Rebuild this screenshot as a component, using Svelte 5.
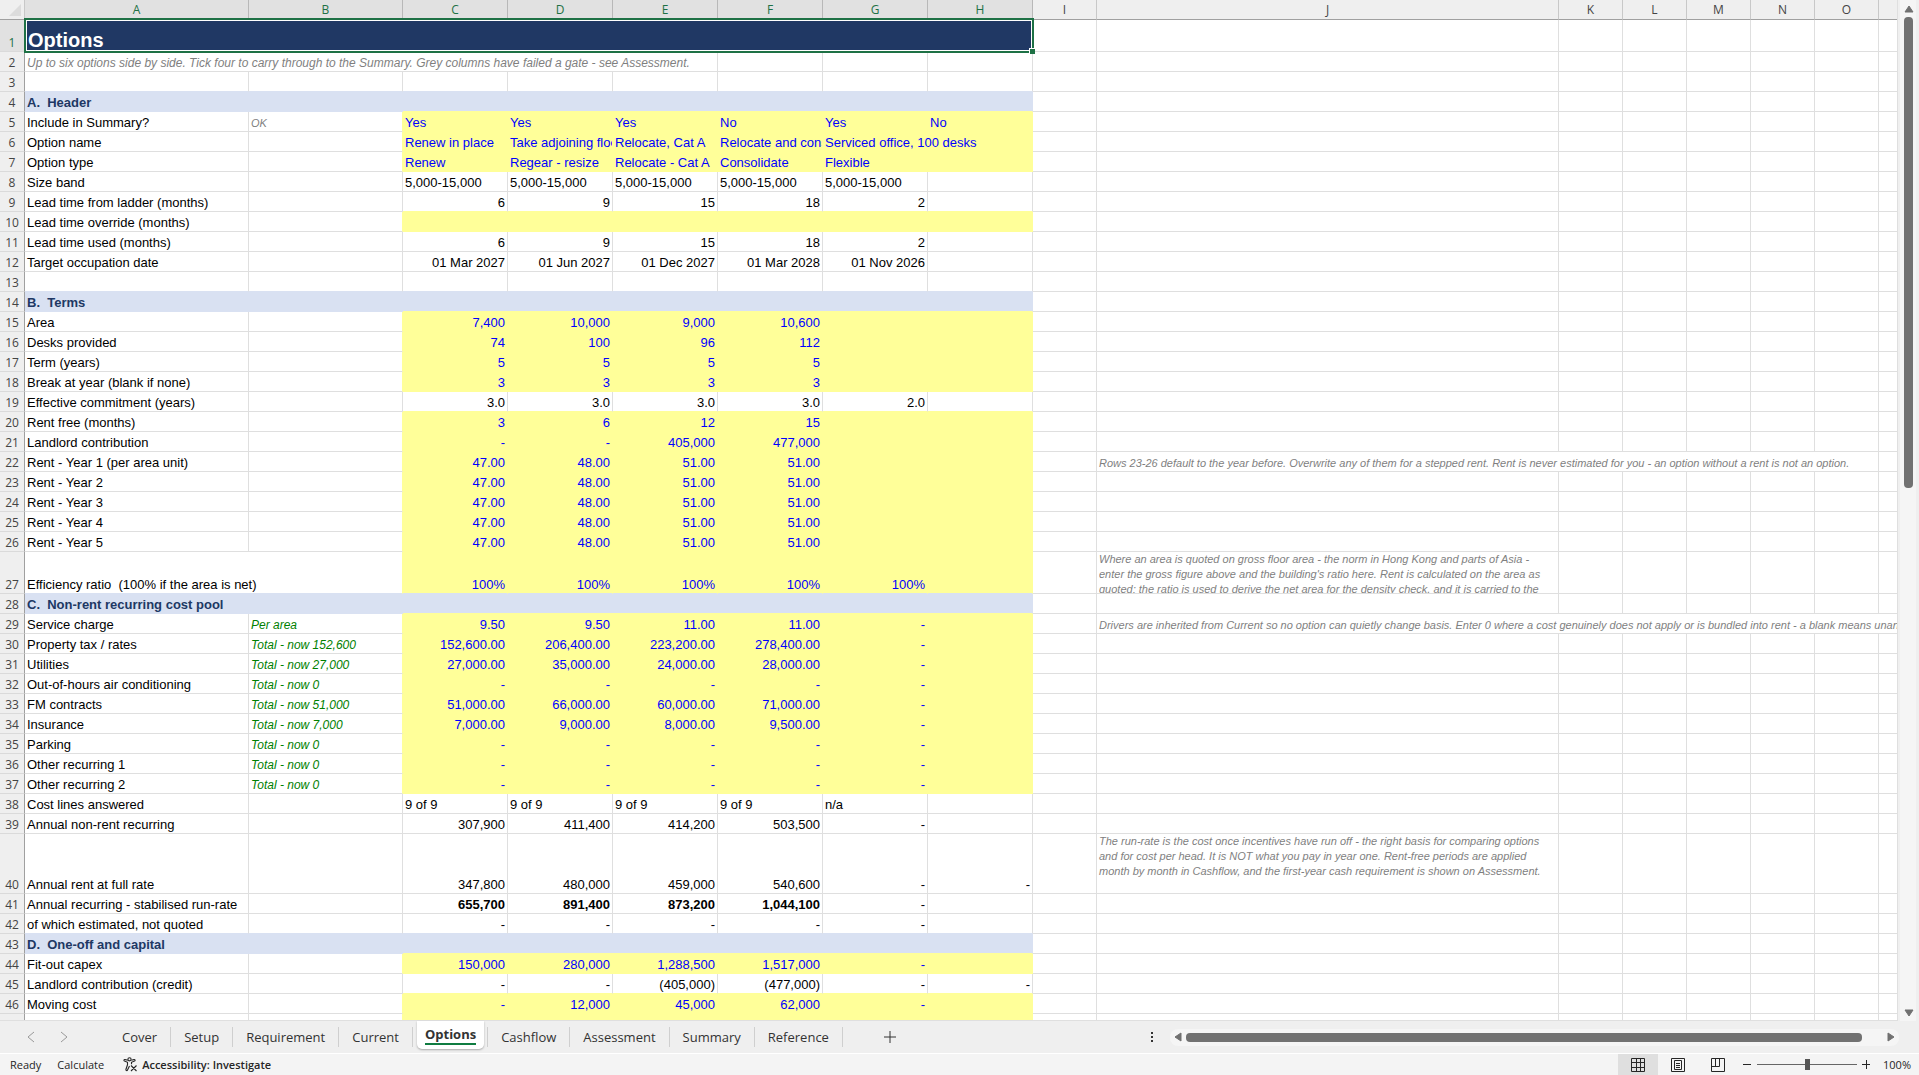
<script>
  const DASH = '-';
  const row = (n, label, values = [], o = {}) => ({ n, label, values, ...o });
  const band = (n, label) => ({ n, label, values: [], band: true });
  const rows = [
    row(3, ''),
    band(4, 'A.  Header'),
    row(5, 'Include in Summary?', ['Yes', 'Yes', 'Yes', 'No', 'Yes', 'No'], { input: true, left: true, b: 'OK', bKind: 'note' }),
    row(6, 'Option name', ['Renew in place', 'Take adjoining floor', 'Relocate, Cat A', 'Relocate and cons', 'Serviced office, 100 desks'], { input: true, left: true, spillG: true }),
    row(7, 'Option type', ['Renew', 'Regear - resize', 'Relocate - Cat A', 'Consolidate', 'Flexible'], { input: true, left: true }),
    row(8, 'Size band', ['5,000-15,000', '5,000-15,000', '5,000-15,000', '5,000-15,000', '5,000-15,000'], { left: true }),
    row(9, 'Lead time from ladder (months)', ['6', '9', '15', '18', '2']),
    row(10, 'Lead time override (months)', [], { input: true }),
    row(11, 'Lead time used (months)', ['6', '9', '15', '18', '2']),
    row(12, 'Target occupation date', ['01 Mar 2027', '01 Jun 2027', '01 Dec 2027', '01 Mar 2028', '01 Nov 2026']),
    row(13, ''),
    band(14, 'B.  Terms'),
    row(15, 'Area', ['7,400', '10,000', '9,000', '10,600'], { input: true }),
    row(16, 'Desks provided', ['74', '100', '96', '112'], { input: true }),
    row(17, 'Term (years)', ['5', '5', '5', '5'], { input: true }),
    row(18, 'Break at year (blank if none)', ['3', '3', '3', '3'], { input: true }),
    row(19, 'Effective commitment (years)', ['3.0', '3.0', '3.0', '3.0', '2.0']),
    row(20, 'Rent free (months)', ['3', '6', '12', '15'], { input: true }),
    row(21, 'Landlord contribution', [DASH, DASH, '405,000', '477,000'], { input: true }),
    row(22, 'Rent - Year 1 (per area unit)', ['47.00', '48.00', '51.00', '51.00'], {
      input: true, noteSpan: 6,
      note: 'Rows 23-26 default to the year before. Overwrite any of them for a stepped rent. Rent is never estimated for you - an option without a rent is not an option.'
    }),
    ...[2, 3, 4, 5].map((y) => row(21 + y, `Rent - Year ${y}`, ['47.00', '48.00', '51.00', '51.00'], { input: true })),
    row(27, 'Efficiency ratio  (100% if the area is net)', ['100%', '100%', '100%', '100%', '100%'], {
      input: true, tall: 'mid', spillA: true, wrap: true,
      note: "Where an area is quoted on gross floor area - the norm in Hong Kong and parts of Asia -\nenter the gross figure above and the building's ratio here. Rent is calculated on the area as\nquoted; the ratio is used to derive the net area for the density check, and it is carried to the"
    }),
    band(28, 'C.  Non-rent recurring cost pool'),
    row(29, 'Service charge', ['9.50', '9.50', '11.00', '11.00', DASH], {
      input: true, b: 'Per area', noteSpan: 7,
      note: 'Drivers are inherited from Current so no option can quietly change basis. Enter 0 where a cost genuinely does not apply or is bundled into rent - a blank means unanswered.'
    }),
    row(30, 'Property tax / rates', ['152,600.00', '206,400.00', '223,200.00', '278,400.00', DASH], { input: true, b: 'Total - now 152,600' }),
    row(31, 'Utilities', ['27,000.00', '35,000.00', '24,000.00', '28,000.00', DASH], { input: true, b: 'Total - now 27,000' }),
    row(32, 'Out-of-hours air conditioning', [DASH, DASH, DASH, DASH, DASH], { input: true, b: 'Total - now 0' }),
    row(33, 'FM contracts', ['51,000.00', '66,000.00', '60,000.00', '71,000.00', DASH], { input: true, b: 'Total - now 51,000' }),
    row(34, 'Insurance', ['7,000.00', '9,000.00', '8,000.00', '9,500.00', DASH], { input: true, b: 'Total - now 7,000' }),
    row(35, 'Parking', [DASH, DASH, DASH, DASH, DASH], { input: true, b: 'Total - now 0' }),
    row(36, 'Other recurring 1', [DASH, DASH, DASH, DASH, DASH], { input: true, b: 'Total - now 0' }),
    row(37, 'Other recurring 2', [DASH, DASH, DASH, DASH, DASH], { input: true, b: 'Total - now 0' }),
    row(38, 'Cost lines answered', ['9 of 9', '9 of 9', '9 of 9', '9 of 9', 'n/a'], { left: true }),
    row(39, 'Annual non-rent recurring', ['307,900', '411,400', '414,200', '503,500', DASH]),
    row(40, 'Annual rent at full rate', ['347,800', '480,000', '459,000', '540,600', DASH, DASH], {
      tall: 'high', wrap: true,
      note: 'The run-rate is the cost once incentives have run off - the right basis for comparing options\nand for cost per head. It is NOT what you pay in year one. Rent-free periods are applied\nmonth by month in Cashflow, and the first-year cash requirement is shown on Assessment.'
    }),
    row(41, 'Annual recurring - stabilised run-rate', ['655,700', '891,400', '873,200', '1,044,100', DASH], { bold: true }),
    row(42, 'of which estimated, not quoted', [DASH, DASH, DASH, DASH, DASH]),
    band(43, 'D.  One-off and capital'),
    row(44, 'Fit-out capex', ['150,000', '280,000', '1,288,500', '1,517,000', DASH], { input: true }),
    row(45, 'Landlord contribution (credit)', [DASH, DASH, '(405,000)', '(477,000)', DASH, DASH]),
    row(46, 'Moving cost', [DASH, '12,000', '45,000', '62,000', DASH], { input: true }),
    row(47, '', [], { input: true })
  ];
  const cols = 'ABCDEFGHIJKLMNOP'.split('');
  const widthClass = (c) =>
    c === 'A' ? 'w-label' : c === 'B' ? 'w-driver' : c < 'I' ? 'w-option' : c === 'J' ? 'w-note' : 'w-std';

  // A fill paints over the gridlines on all of its sides.
  const edge = (i, wide) => {
    const next = rows[i + 1];
    if (next?.band) return 'edge-band';
    if (wide && next?.input) return 'edge-input';
    return '';
  };
  const tabs = ['Cover', 'Setup', 'Requirement', 'Current', 'Options', 'Cashflow', 'Assessment', 'Summary', 'Reference'];
  let active = $state('Options');
  let zoom = $state(50);
</script>

<div class="app">
  <main class="workspace">
    <div class="pane">
      <table>
        <colgroup>
          <col class="w-rownum" />
          {#each cols as c}<col class={widthClass(c)} />{/each}
        </colgroup>
        <thead>
          <tr>
            <th class="corner" aria-label="Select all"><svg width="12" height="12" viewBox="0 0 12 12"><path d="M12 0v12H0z" fill="#dcdcdc" /></svg></th>
            {#each cols as c}<th scope="col" class:picked={c < 'I'}>{c === 'P' ? '' : c}</th>{/each}
          </tr>
        </thead>
        <tbody>
          <tr class="title-row">
            <th scope="row" class="picked">1</th>
            <td colspan="8" class="title">Options<span class="selection"></span><span class="handle"></span></td>
            {#each Array(8) as _}<td></td>{/each}
          </tr>
          <tr>
            <th scope="row">2</th>
            <td colspan="5" class="intro">Up to six options side by side. Tick four to carry through to the Summary. Grey columns have failed a gate - see Assessment.</td>
            {#each Array(11) as _}<td></td>{/each}
          </tr>
          {#each rows as r, i}
            <tr class={r.tall ?? ''}>
              <th scope="row">{r.n === 47 ? '' : r.n}</th>
              {#if r.band}
                <td colspan="2" class="band">{r.label}</td>
                <td colspan="6" class={['band', edge(i, true)]}></td>
              {:else}
                <td colspan={r.spillA ? 2 : 1} class={[edge(i, false), r.spillA && 'side-input']}>{r.label}</td>
                {#if !r.spillA}
                  <td class={[r.bKind ?? 'driver', edge(i, false), r.input && 'side-input']}>{r.b ?? ''}</td>
                {/if}
                {#each Array(r.spillG ? 5 : 6) as _, k}
                  <td
                    colspan={r.spillG && k === 4 ? 2 : 1}
                    class={['value', r.input && 'input', r.left && 'left', r.bold && r.values[k] !== DASH && 'bold', edge(i, true)]}>{r.values[k] ?? ''}</td>
                {/each}
              {/if}
              <td></td>
              {#if r.note}
                <td colspan={r.noteSpan ?? 1} class={['note', r.wrap && 'wrap']}>{#if r.wrap}<div>{r.note}</div>{:else}{r.note}{/if}</td>
              {:else}
                <td></td>
              {/if}
              {#each Array(7 - (r.noteSpan ?? 1)) as _}<td></td>{/each}
            </tr>
          {/each}
        </tbody>
      </table>
    </div>
    <div class="vscroll">
      <button aria-label="Scroll up"><svg width="10" height="8" viewBox="0 0 10 8"><path d="M5 1 9 7H1z" fill="#717171" stroke="#717171" stroke-linejoin="round" /></svg></button>
      <div class="vtrack"><div class="vthumb"></div></div>
      <button aria-label="Scroll down"><svg width="10" height="8" viewBox="0 0 10 8"><path d="M5 7 1 1h8z" fill="#717171" stroke="#717171" stroke-linejoin="round" /></svg></button>
    </div>
  </main>

  <nav class="tabbar">
    <div class="arrows">
      <button aria-label="Previous sheet"><svg width="8" height="12" viewBox="0 0 8 12"><path d="M7 1 1 6l6 5" /></svg></button>
      <button aria-label="Next sheet"><svg width="8" height="12" viewBox="0 0 8 12"><path d="m1 1 6 5-6 5" /></svg></button>
    </div>
    <ul class="tabs">
      {#each tabs as t}
        <li class:active={t === active}><button onclick={() => (active = t)}><span>{t}</span></button></li>
      {/each}
    </ul>
    <button class="add" aria-label="New sheet"><svg width="12" height="12" viewBox="0 0 12 12"><path d="M6 0v12M0 6h12" /></svg></button>
    <button class="dots" aria-label="Resize tab bar"><svg width="3" height="12" viewBox="0 0 3 12"><path d="M0 1h2v2H0zM0 5h2v2H0zM0 9h2v2H0z" /></svg></button>
    <div class="hscroll">
      <button aria-label="Scroll left"><svg width="8" height="10" viewBox="0 0 8 10"><path d="M1 5 7 1v8z" stroke-linejoin="round" /></svg></button>
      <div class="htrack"><div class="hthumb"></div></div>
      <button aria-label="Scroll right"><svg width="8" height="10" viewBox="0 0 8 10"><path d="M7 5 1 1v8z" stroke-linejoin="round" /></svg></button>
    </div>
  </nav>

  <footer class="status">
    <span>Ready</span>
    <span>Calculate</span>
    <button class="access">
      <svg width="15" height="15" viewBox="0 0 15 15" fill="none" stroke="#262626" stroke-width="1.1">
        <circle cx="6.500" cy="2.300" r="1.600" />
        <path d="M4.800 3.300 2 2.500C.8 2.300.6 3.700 1.500 4.100l3 1.200v2.500l-1.600 4.700c-.2 1.200 1.200 1.500 1.600.5L6.500 9M8.300 3.300l2.700-.8c1.200-.2 1.500 1.200.5 1.600l-3 1.200v2M8 8.500l5.500 5.500M13.500 8.500 8 14" />
      </svg>
      Accessibility: Investigate
    </button>
    <div class="views">
      <button class="on" aria-label="Normal view"><svg width="14" height="14" viewBox="0 0 14 14"><path d="M.5.500h13v13H.5zM.5 4.500h13M.5 9.500h13M5.500.500v13M9.500.500v13" /></svg></button>
      <button aria-label="Page layout"><svg width="14" height="14" viewBox="0 0 14 14"><path d="M.5.500h13v13H.5zM3.500 2.500h7v9h-7zM5 5.500h4M5 7.500h4M5 9.500h4" /></svg></button>
      <button aria-label="Page break preview"><svg width="14" height="14" viewBox="0 0 14 14"><path d="M.5.500h13v13H.5zM.5 8.500h8v-8M4.500.500v8" /></svg></button>
    </div>
    <div class="zoom">
      <button aria-label="Zoom out"><svg width="9" height="9" viewBox="0 0 9 9"><path d="M0 4.500h8" /></svg></button>
      <input type="range" min="0" max="100" bind:value={zoom} aria-label="Zoom" />
      <button aria-label="Zoom in"><svg width="9" height="9" viewBox="0 0 9 9"><path d="M0 4.500h8M4.500 0v9" /></svg></button>
      <span class="percent">100%</span>
    </div>
  </footer>
</div>

<style>
  :global(body) { margin: 0; overflow: hidden; }
  .app { display: flex; flex-direction: column; height: 100vh; background: #efefef; font-family: 'Open Sans', sans-serif; color: #333; }
  button { border: 0; padding: 0; background: none; font: inherit; color: inherit; display: flex; align-items: center; justify-content: center; }
  svg { display: block; }

  .workspace { flex: 1; min-height: 0; display: flex; }
  .pane { flex: 1; min-width: 0; overflow: hidden; background: #fff; border-right: 1px solid #dfdfdf; border-bottom: 1px solid #dfdfdf; }
  table { table-layout: fixed; width: 0; border-collapse: separate; border-spacing: 0; font-family: 'Liberation Sans', sans-serif; font-size: 13px; line-height: 16px; color: #000; }
  .w-rownum { width: 25px; }
  .w-label { width: 224px; }
  .w-driver { width: 154px; }
  .w-option { width: 105px; }
  .w-note { width: 462px; }
  .w-std { width: 64px; }
  tr { height: 20px; }
  th { box-sizing: border-box; padding: 0; font-family: 'Open Sans', sans-serif; font-size: 12px; font-weight: 400; color: #444; background: #efefef; vertical-align: bottom; line-height: 18px; }
  thead th { height: 20px; border-right: 1px solid #c8c8c8; border-bottom: 1px solid #a0a0a0; }
  thead th.picked { background: #e1e1e1; border-right-color: #b8b8b8; }
  th.picked { color: #1e7145; }
  tbody th { line-height: 16px; border-right: 1px solid #a0a0a0; border-bottom: 1px solid #dadada; }
  tbody th.picked { background: #e1e1e1; }
  .corner { border-right-color: #c8c8c8; }
  .corner svg { margin: 0 3px 3px auto; }
  td { box-sizing: border-box; padding: 0 2px; border-right: 1px solid #dfdfdf; border-bottom: 1px solid #dfdfdf; vertical-align: bottom; white-space: pre; overflow: hidden; }
  .mid { height: 42px; }
  .high { height: 60px; }
  .title-row { height: 32px; }
  .title { position: relative; overflow: visible; padding-left: 3px; background: #203864; color: #fff; font-size: 20px; font-weight: 700; line-height: 22px; border-color: #203864; }
  .selection { position: absolute; inset: -2px -2px -2px -1px; border: 2px solid #1e7145; box-shadow: inset 0 0 0 1px #fff; }
  .handle { position: absolute; right: -3px; bottom: -3px; width: 5px; height: 5px; background: #1e7145; border-left: 1px solid #fff; border-top: 1px solid #fff; }
  .intro { font-size: 12px; font-style: italic; color: #7f7f7f; }
  .note { font-size: 11px; font-style: italic; color: #7f7f7f; }
  .driver { font-size: 12px; font-style: italic; color: #008000; }
  .value { text-align: right; }
  .value.left { text-align: left; }
  .bold { font-weight: 700; }
  .input { background: #ffff99; color: #0000ff; border-color: #ffff99; }
  .band { background: #d9e1f2; color: #203864; font-weight: 700; border-color: #d9e1f2; }
  .side-input { border-right-color: #ffff99; }
  .edge-input { border-bottom-color: #ffff99; }
  .edge-band { border-bottom-color: #d9e1f2; }
  .wrap { vertical-align: top; line-height: 15px; }
  .mid .wrap div { height: 41px; overflow: hidden; }

  .vscroll { width: 21px; display: flex; flex-direction: column; align-items: center; box-sizing: border-box; padding: 2px 0; background: linear-gradient(90deg, #efefef 2px, #f5f5f5 2px 18px, #efefef 18px); }
  .vscroll button { width: 16px; height: 13px; }
  .vtrack { flex: 1; width: 9px; }
  .vthumb { height: 47.5%; margin-top: 2px; border-radius: 4px; background: #717171; }

  .tabbar { display: flex; align-items: center; height: 32px; font-size: 13px; }
  .tabbar path { fill: none; stroke: #999; }
  .arrows { display: flex; gap: 25px; padding: 0 41px 0 27px; }
  .tabs { display: flex; align-self: stretch; margin: 0; padding: 0; list-style: none; }
  .tabs li { display: flex; background: linear-gradient(#cfcfcf, #cfcfcf) right center / 1px 20px no-repeat; padding-right: 1px; }
  .tabs button { padding: 0 13px; }
  .tabs .active { padding: 0 4px 4px; }
  .active button { padding: 0 8px; background: #fff; border-radius: 0 0 5px 5px; font-weight: 700; box-shadow: 0 1px 2px #aaa; }
  .active span { border-bottom: 2px solid #107c41; }
  .add { margin-left: 41px; }
  .tabbar .add path { stroke: #333; }
  .dots { margin-left: auto; }
  .tabbar .dots path { fill: #333; stroke: none; }
  .hscroll { display: flex; align-items: center; width: 38%; height: 17px; margin: 0 20px 0 16px; background: #f5f5f5; border-radius: 8px; }
  .hscroll button { width: 16px; height: 16px; }
  .tabbar .hscroll path { fill: #717171; stroke: #717171; }
  .htrack { flex: 1; }
  .hthumb { width: 97%; height: 9px; border-radius: 4px; background: #717171; }

  .status { display: flex; align-items: center; height: 21px; border-top: 1px solid #fff; background: #f4f4f4; font-size: 11px; color: #262626; padding-left: 10px; }
  .status span + span { margin-left: 16px; }
  .access { margin-left: 19px; gap: 4px; font-weight: 600; }
  .views { display: flex; align-self: stretch; margin-left: auto; }
  .views button { width: 40px; }
  .views .on { background: #dfdfdf; }
  .views path, .zoom path { fill: none; stroke: #262626; }
  .zoom { display: flex; align-items: center; margin: 0 8px 0 5px; }
  input { appearance: none; width: 100px; height: 16px; margin: 0 5px; background: linear-gradient(#666, #666) center / 100% 1px no-repeat; }
  input::-webkit-slider-thumb { appearance: none; width: 5px; height: 11px; background: #555; }
  .zoom .percent { margin-left: 12px; }
</style>
